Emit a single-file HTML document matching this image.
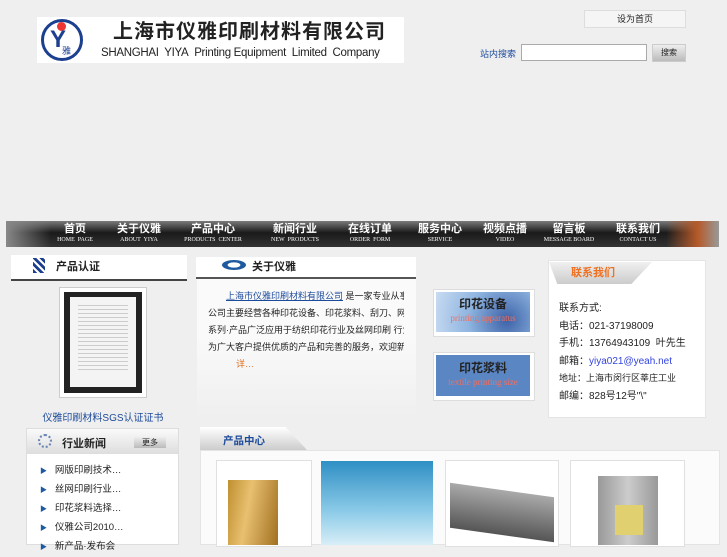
<!DOCTYPE html>
<html><head><meta charset="utf-8"><style>
body{margin:0;width:727px;height:545px;background:#efefef;position:relative;overflow:hidden;font-family:"Liberation Sans","Noto Sans CJK SC",sans-serif;font-size:11px;color:#222}
.a{position:absolute}
.nav span{position:absolute;top:2px;text-align:center;color:#fff;font-weight:bold;font-size:11px;line-height:13px;width:80px}
.nav small{display:block;font-size:6px;font-weight:normal;line-height:9px;font-family:"Liberation Serif",serif}
.ln{position:absolute;left:0;white-space:nowrap;font-size:9px;width:196px;overflow:hidden}
</style></head><body>
<!-- header -->
<div class="a" style="left:37px;top:17px;width:367px;height:46px;background:#fff"></div>
<div class="a" style="left:41px;top:19px;width:42px;height:42px;border:3px solid #1d3f8f;border-radius:50%;box-sizing:border-box"></div>
<div class="a" style="left:57px;top:22px;width:9px;height:9px;background:#e33;border-radius:50%"></div>
<div class="a" style="left:50px;top:28px;font-size:24px;font-weight:bold;color:#1d3f8f;line-height:24px">Y</div>
<div class="a" style="left:62px;top:44px;font-size:9px;color:#1d3f8f">雅</div>
<div class="a" style="left:113px;top:19px;font-size:20px;font-weight:bold;letter-spacing:1px;line-height:26px">上海市仪雅印刷材料有限公司</div>
<div class="a" style="left:101px;top:46px;font-size:11.5px;line-height:14px;white-space:nowrap;letter-spacing:-0.3px">SHANGHAI&nbsp; YIYA&nbsp; Printing Equipment&nbsp; Limited&nbsp; Company</div>
<div class="a" style="left:584px;top:10px;width:100px;height:16px;background:#f5f5f5;border:1px solid #ddd;font-size:9px;text-align:center;line-height:16px">设为首页</div>
<div class="a" style="left:480px;top:47px;color:#1d4b9b;font-size:9px">站内搜索</div>
<div class="a" style="left:521px;top:44px;width:124px;height:15px;background:#fff;border:1px solid #aaa"></div>
<div class="a" style="left:652px;top:44px;width:32px;height:16px;background:linear-gradient(#eee,#bbb);border:1px solid #ccc;font-size:8px;text-align:center;line-height:16px">搜索</div>
<!-- nav -->
<div class="a nav" style="left:6px;top:221px;width:713px;height:26px;background:linear-gradient(#7a7a7a,#1a1a1a 45%,#333 100%)">
<div class="a" style="left:0;top:0;width:45px;height:26px;background:linear-gradient(90deg,#888,transparent)"></div>
<span style="left:29px">首页<small>HOME&nbsp; PAGE</small></span>
<span style="left:93px">关于仪雅<small>ABOUT&nbsp; YIYA</small></span>
<span style="left:167px">产品中心<small>PRODUCTS&nbsp; CENTER</small></span>
<span style="left:249px">新闻行业<small>NEW&nbsp; PRODUCTS</small></span>
<span style="left:324px">在线订单<small>ORDER&nbsp; FORM</small></span>
<span style="left:394px">服务中心<small>SERVICE</small></span>
<span style="left:459px">视频点播<small>VIDEO</small></span>
<span style="left:523px">留言板<small>MESSAGE BOARD</small></span>
<span style="left:592px">联系我们<small>CONTACT US</small></span>
<div class="a" style="left:660px;top:0;width:53px;height:26px;background:linear-gradient(90deg,transparent,#b55a2a 60%,#999)"></div>
</div>
<!-- left cert -->
<div class="a" style="left:11px;top:255px;width:176px;height:24px;background:#fff;border-bottom:2px solid #444"></div>
<div class="a" style="left:33px;top:258px;width:12px;height:15px;background:repeating-linear-gradient(45deg,#1d3f8f 0 3px,#fff 3px 5px)"></div>
<div class="a" style="left:56px;top:258px;font-weight:bold;font-size:11px">产品认证</div>
<div class="a" style="left:59px;top:287px;width:88px;height:111px;background:#fff;border:1px solid #ccc;box-sizing:border-box"></div>
<div class="a" style="left:64px;top:292px;width:78px;height:101px;background:#222"></div>
<div class="a" style="left:70px;top:297px;width:66px;height:90px;background:#f4f4f4"></div>
<div class="a" style="left:78px;top:302px;width:50px;height:70px;background:repeating-linear-gradient(#f4f4f4 0 3px,#ccc 3px 4px)"></div>
<div class="a" style="left:11px;top:409px;width:184px;text-align:center;color:#1d4b9b;font-size:10px">仪雅印刷材料SGS认证证书</div>
<!-- about -->
<div class="a" style="left:196px;top:257px;width:220px;height:20px;background:#fff;border-bottom:2px solid #555"></div>
<div class="a" style="left:222px;top:260px;width:24px;height:10px;border-radius:50%;background:radial-gradient(#fff 35%,#1d5aa0 40%)"></div>
<div class="a" style="left:252px;top:258px;font-weight:bold;font-size:11px">关于仪雅</div>
<div class="a" style="left:197px;top:279px;width:219px;height:139px;background:linear-gradient(#fafafa,#fafafa 40%,#efefef 100%)"></div>
<div class="a" style="left:208px;top:289px;width:200px;height:90px">
<div class="ln" style="top:0;left:18px;width:178px"><span style="color:#1d4b9b;text-decoration:underline">上海市仪雅印刷材料有限公司</span> 是一家专业从事印刷器材研发生产销售的公司</div>
<div class="ln" style="top:17px">公司主要经营各种印花设备、印花浆料、刮刀、网框、网纱及配件等相关产品</div>
<div class="ln" style="top:34px">系列·产品广泛应用于纺织印花行业及丝网印刷 行业，公司本着诚信经营的原则</div>
<div class="ln" style="top:51px">为广大客户提供优质的产品和完善的服务，欢迎新老客户来电咨询洽谈合作。</div>
<div class="ln" style="top:68px;left:28px;color:#e07020">详…</div>
</div>
<!-- banners -->
<div class="a" style="left:433px;top:289px;width:100px;height:46px;background:#fff;border:1px solid #ddd"></div>
<div class="a" style="left:436px;top:292px;width:94px;height:40px;background:radial-gradient(circle at 75% 70%,#3d62a8,#8eb4e0 50%,#c9dcf2);text-align:center">
<div style="font-size:12px;font-weight:bold;line-height:18px;margin-top:3px">印花设备</div><div style="font-size:9px;color:#f07060;font-family:'Liberation Serif',serif;line-height:10px">printing apparatus</div></div>
<div class="a" style="left:433px;top:352px;width:100px;height:47px;background:#fff;border:1px solid #ddd"></div>
<div class="a" style="left:436px;top:355px;width:94px;height:41px;background:#5b86c4;text-align:center">
<div style="font-size:12px;font-weight:bold;line-height:18px;margin-top:4px">印花浆料</div><div style="font-size:9px;color:#f07060;font-family:'Liberation Serif',serif;line-height:10px">textile printing size</div></div>
<!-- contact -->
<div class="a" style="left:548px;top:260px;width:158px;height:158px;background:#fff;border:1px solid #e4e4e4;box-sizing:border-box"></div>
<div class="a" style="left:549px;top:262px;width:103px;height:22px;background:linear-gradient(#f0f0f0,#ccc);clip-path:polygon(0 0,100% 0,80% 100%,8% 100%)"></div>
<div class="a" style="left:571px;top:264px;color:#f07020;font-weight:bold;font-size:11px">联系我们</div>
<div class="a" style="left:559px;top:300px;font-size:10px;line-height:17.5px;white-space:nowrap">
<div>联系方式:</div><div>电话：021-37198009</div><div>手机：13764943109 &nbsp;叶先生</div><div>邮箱：<span style="color:#3344dd">yiya021@yeah.net</span></div><div style="font-size:9px">地址：上海市闵行区莘庄工业</div><div>邮编：828号12号"\"</div></div>
<!-- news -->
<div class="a" style="left:26px;top:428px;width:153px;height:117px;background:#fff;border:1px solid #ddd;box-sizing:border-box"></div>
<div class="a" style="left:27px;top:429px;width:151px;height:25px;background:linear-gradient(#fafafa,#ddd)"></div>
<div class="a" style="left:38px;top:434px;width:14px;height:14px;border:2px dotted #6a86b8;border-radius:50%;box-sizing:border-box"></div>
<div class="a" style="left:62px;top:435px;font-weight:bold;font-size:11px">行业新闻</div>
<div class="a" style="left:134px;top:437px;width:32px;height:11px;background:linear-gradient(#eee,#bbb);font-size:8px;text-align:center;line-height:11px">更多</div>
<div class="a" style="left:40px;top:462px;font-size:9.5px;line-height:18px;white-space:nowrap">
<div><span style="color:#1d5aa0;font-size:7px">▶</span>&nbsp;&nbsp; 网版印刷技术…</div><div><span style="color:#1d5aa0;font-size:7px">▶</span>&nbsp;&nbsp; 丝网印刷行业…</div><div><span style="color:#1d5aa0;font-size:7px">▶</span>&nbsp;&nbsp; 印花浆料选择…</div><div><span style="color:#1d5aa0;font-size:7px">▶</span>&nbsp;&nbsp; 仪雅公司2010…</div><div><span style="color:#1d5aa0;font-size:7px">▶</span>&nbsp;&nbsp; 新产品·发布会</div></div>
<!-- products -->
<div class="a" style="left:200px;top:427px;width:107px;height:23px;background:linear-gradient(#fff,#ccc);clip-path:polygon(0 0,80% 0,100% 100%,0 100%)"></div>
<div class="a" style="left:223px;top:433px;color:#1d4b9b;font-weight:bold;font-size:10.5px">产品中心</div>
<div class="a" style="left:200px;top:450px;width:520px;height:95px;background:#fbfbfb;border:1px solid #e4e4e4;box-sizing:border-box"></div>
<div class="a" style="left:216px;top:460px;width:94px;height:85px;background:#fff;border:1px solid #e0e0e0"></div>
<div class="a" style="left:228px;top:480px;width:50px;height:65px;background:linear-gradient(100deg,#c09030,#e8c070 40%,#a07020)"></div>
<div class="a" style="left:321px;top:461px;width:112px;height:84px;background:linear-gradient(#2f8fc4,#8ccbe8 60%,#d8eef7)"></div>
<div class="a" style="left:445px;top:460px;width:112px;height:85px;background:#fff;border:1px solid #e0e0e0"></div>
<div class="a" style="left:450px;top:490px;width:104px;height:45px;background:linear-gradient(#aaa,#555);transform:skewY(8deg)"></div>
<div class="a" style="left:570px;top:460px;width:113px;height:85px;background:#fff;border:1px solid #e0e0e0"></div>
<div class="a" style="left:598px;top:476px;width:60px;height:69px;background:linear-gradient(90deg,#999,#ccc,#999)"></div>
<div class="a" style="left:615px;top:505px;width:28px;height:30px;background:#e0d070"></div>
</body></html>
